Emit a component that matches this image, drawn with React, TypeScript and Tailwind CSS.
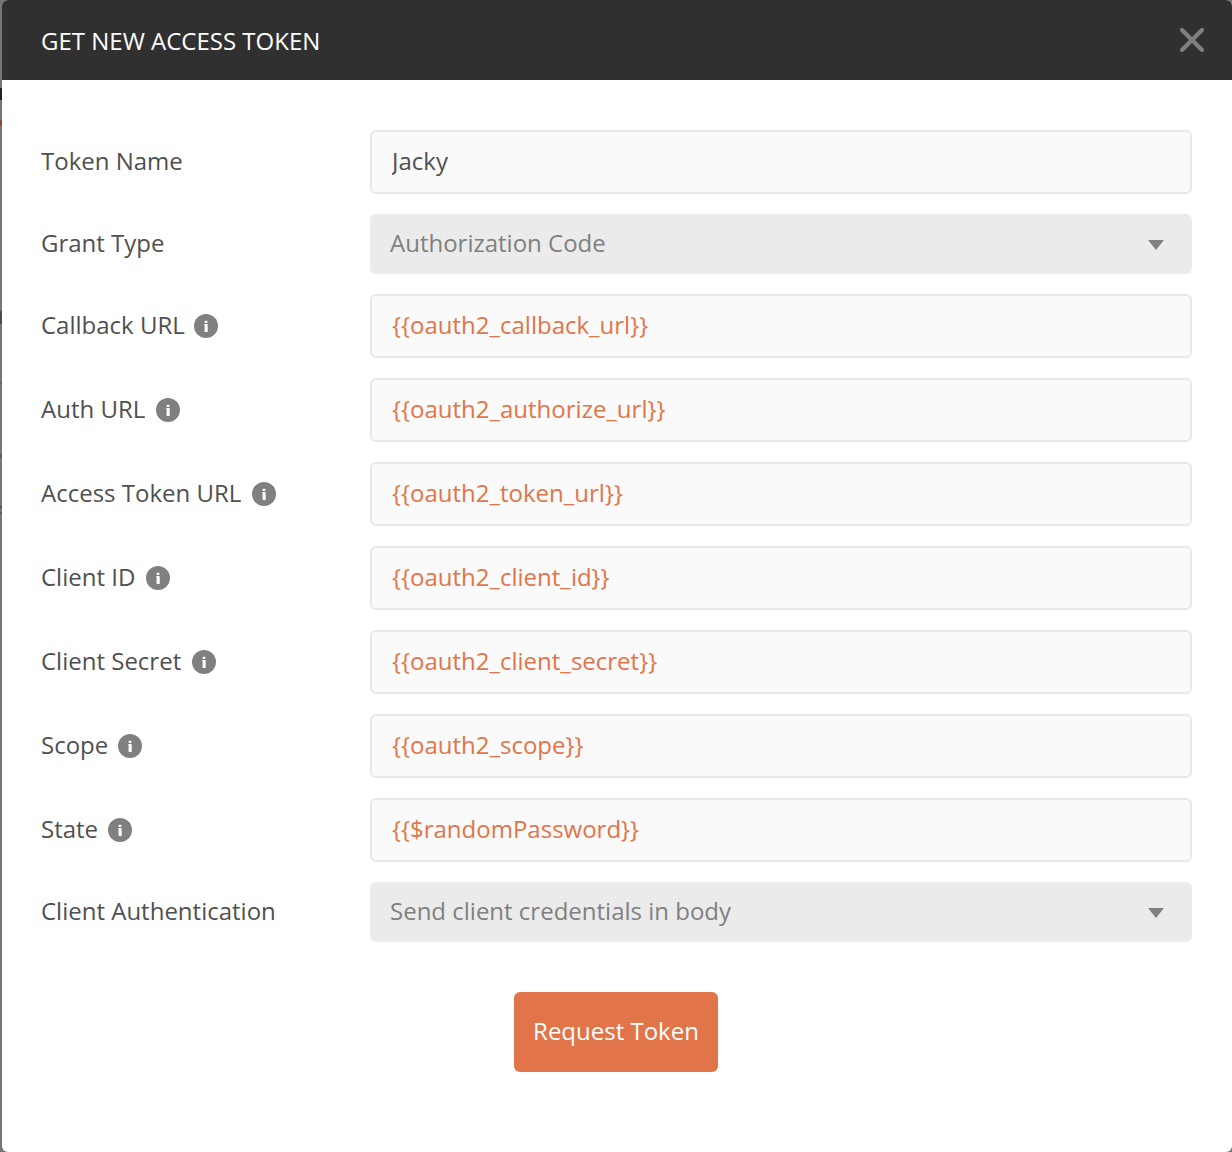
type Row = { label: string; info?: string; value: string; kind: 'text' | 'variable' | 'select' };

const rows: Row[] = [
  { label: 'Token Name', value: 'Jacky', kind: 'text' },
  { label: 'Grant Type', value: 'Authorization Code', kind: 'select' },
  { label: 'Callback URL', info: 'ml-[9px]', value: '{{oauth2_callback_url}}', kind: 'variable' },
  { label: 'Auth URL', info: 'ml-[11px]', value: '{{oauth2_authorize_url}}', kind: 'variable' },
  { label: 'Access Token URL', info: 'ml-[11px]', value: '{{oauth2_token_url}}', kind: 'variable' },
  { label: 'Client ID', info: 'ml-[11px]', value: '{{oauth2_client_id}}', kind: 'variable' },
  { label: 'Client Secret', info: 'ml-[11px]', value: '{{oauth2_client_secret}}', kind: 'variable' },
  { label: 'Scope', info: 'ml-[10px]', value: '{{oauth2_scope}}', kind: 'variable' },
  { label: 'State', info: 'ml-[10px]', value: '{{$randomPassword}}', kind: 'variable' },
  { label: 'Client Authentication', value: 'Send client credentials in body', kind: 'select' },
];

function InfoIcon({ className }: { className: string }) {
  return (
    <svg className={`size-6 shrink-0 ${className}`} viewBox="0 0 24 24">
      <circle cx="12" cy="12" r="12" fill="#808080" />
      <rect x="10.6" y="6.7" width="2.9" height="2.3" rx="0.9" fill="#fff" />
      <path d="M10 10.5q0-.4.4-.4h2.8q.5 0 .5.5v6.8q0 .5-.5.5h-2.1q-.5 0-.5-.5v-6.3H10z" fill="#fff" />
    </svg>
  );
}

function Field({ row }: { row: Row }) {
  if (row.kind === 'select') {
    return (
      <button className="flex h-[60px] flex-1 items-center justify-between rounded-md bg-[#ebebeb] pr-7 pl-5 text-[#808080]">
        <span className="pb-[2px]">{row.value}</span>
        <svg className="mt-[2px] h-[10px] w-4" viewBox="0 0 16 10">
          <path d="M0 0h16L8 10z" fill="#808080" />
        </svg>
      </button>
    );
  }
  return (
    <div
      className={`flex h-16 flex-1 items-center rounded-md border-2 border-[#e9e9e9] bg-[#fafafa] px-5 pb-[2px] ${
        row.kind === 'variable' ? 'text-[#e27449]' : 'text-[#505050]'
      }`}
    >
      <span className="overflow-hidden">{row.value}</span>
    </div>
  );
}

/* Dimmed page edge that stays visible beside the dialog. */
function Backdrop() {
  return (
    <div className="flex w-[2px] shrink-0 flex-col">
      <div className="mt-[88px] h-3 bg-[#222222]" />
      <div className="mt-5 h-[6px] bg-[#8a4a35]" />
      <div className="mt-[185px] h-[13px] bg-[#4c4c4c]" />
      <div className="mt-[58px] h-[2px] bg-[#7c5a50]" />
      <div className="mt-[70px] h-1 bg-[#606060]" />
      <div className="mt-[48px] h-[2px] bg-[#505050]" />
      <div className="mt-1 h-[2px] bg-[#5c5c5c]" />
    </div>
  );
}

export default function App() {
  return (
    <div className="flex h-[1152px] w-[1232px] overflow-hidden bg-[#757575] font-['Open_Sans',sans-serif] text-[24px] leading-8">
      <Backdrop />
      <main className="flex flex-1 flex-col overflow-hidden rounded-md bg-white">
        <header className="flex h-20 shrink-0 items-center justify-between bg-[#303030] pr-7 pl-[39px]">
          <h1 className="pt-[2px] text-white">GET NEW ACCESS TOKEN</h1>
          <svg className="size-6" viewBox="0 0 24 24" stroke="#808080" strokeWidth="4.2" strokeLinecap="round">
            <path d="M2 2l20 20M22 2L2 22" />
          </svg>
        </header>
        <form className="flex flex-col gap-5 pt-[50px] pr-10 pl-[39px]">
          {rows.map((row) => (
            <div key={row.label} className="flex items-center">
              <label className="flex w-[329px] items-center text-[#505050]">
                <span className="pb-[2px]">{row.label}</span>
                {row.info && <InfoIcon className={row.info} />}
              </label>
              <Field row={row} />
            </div>
          ))}
        </form>
        <button className="mt-[50px] ml-[512px] h-20 w-[204px] rounded-md bg-[#e27449] pb-[2px] text-white">
          Request Token
        </button>
      </main>
    </div>
  );
}
